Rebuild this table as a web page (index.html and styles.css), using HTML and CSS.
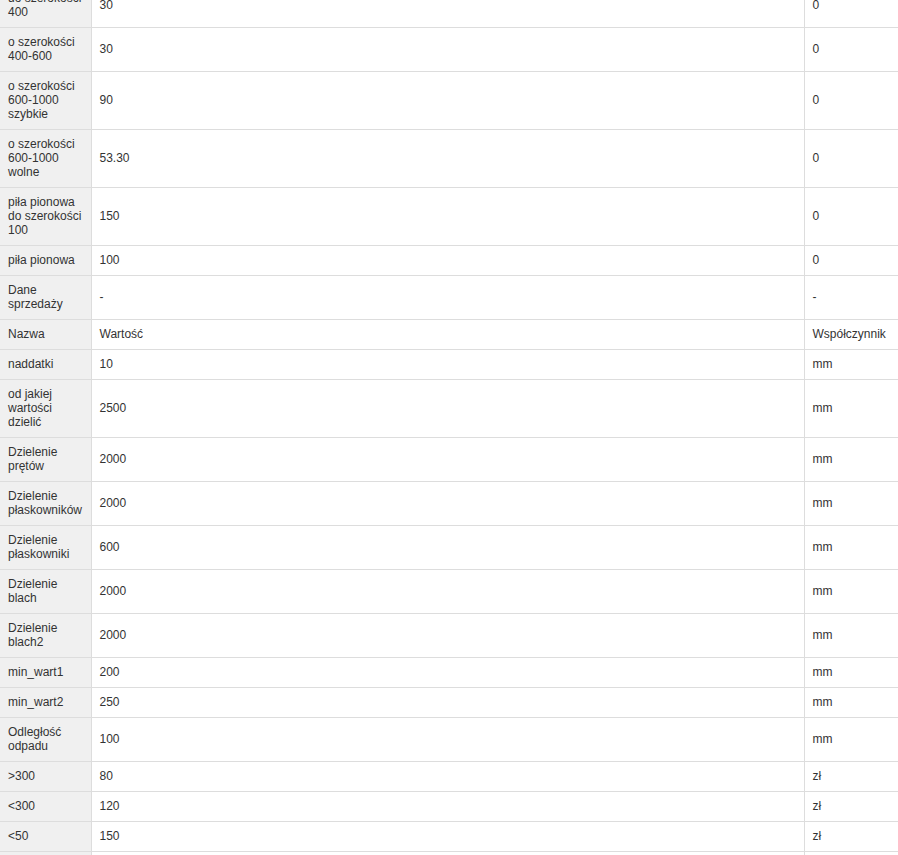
FILE: index.html
```html
<!DOCTYPE html>
<html lang="pl">
<head>
  <meta charset="UTF-8" />
  <meta name="viewport" content="width=device-width, initial-scale=1.0"/>
  <title>Ustawienia</title>
  <link rel="stylesheet" href="styles.css">
</head>
<body>
  <table class="settings">
    <colgroup>
      <col class="col-name">
      <col class="col-value">
      <col class="col-unit">
    </colgroup>
    <tbody>
      <tr><th>do szerokości 400</th><td>30</td><td>0</td></tr>
      <tr><th>o szerokości 400-600</th><td>30</td><td>0</td></tr>
      <tr><th>o szerokości 600-1000 szybkie</th><td>90</td><td>0</td></tr>
      <tr><th>o szerokości 600-1000 wolne</th><td>53.30</td><td>0</td></tr>
      <tr><th>piła pionowa do szerokości 100</th><td>150</td><td>0</td></tr>
      <tr><th>piła pionowa</th><td>100</td><td>0</td></tr>
      <tr><th>Dane sprzedaży</th><td>-</td><td>-</td></tr>
      <tr><th>Nazwa</th><td>Wartość</td><td>Współczynnik</td></tr>
      <tr><th>naddatki</th><td>10</td><td>mm</td></tr>
      <tr><th>od jakiej wartości dzielić</th><td>2500</td><td>mm</td></tr>
      <tr><th>Dzielenie prętów</th><td>2000</td><td>mm</td></tr>
      <tr><th>Dzielenie płaskowników</th><td>2000</td><td>mm</td></tr>
      <tr><th>Dzielenie płaskowniki</th><td>600</td><td>mm</td></tr>
      <tr><th>Dzielenie blach</th><td>2000</td><td>mm</td></tr>
      <tr><th>Dzielenie blach2</th><td>2000</td><td>mm</td></tr>
      <tr><th>min_wart1</th><td>200</td><td>mm</td></tr>
      <tr><th>min_wart2</th><td>250</td><td>mm</td></tr>
      <tr><th>Odległość odpadu</th><td>100</td><td>mm</td></tr>
      <tr><th>&gt;300</th><td>80</td><td>zł</td></tr>
      <tr><th>&lt;300</th><td>120</td><td>zł</td></tr>
      <tr><th>&lt;50</th><td>150</td><td>zł</td></tr>
      <tr><th>&lt;20</th><td>200</td><td>zł</td></tr>
    </tbody>
  </table>
</body>
</html>
```

FILE: styles.css
```css
body {
  margin: 0;
  font-family: "Liberation Sans", Arial, sans-serif;
  font-size: 12px;
  color: #333;
  background: #fff;
  overflow: hidden;
}
.settings {
  width: 898px;
  margin-top: -17px;
  border-collapse: collapse;
  table-layout: fixed;
}
.col-name {
  width: 91px;
}
.col-unit {
  width: 94px;
}
.settings th,
.settings td {
  padding: 7px 8px 8px;
  line-height: 14px;
  border: 1px solid #ddd;
  text-align: left;
  vertical-align: middle;
  font-weight: normal;
}
.settings th {
  background: #f0f0f0;
  border-left: none;
}
.settings td:last-child {
  border-right: none;
}
```
